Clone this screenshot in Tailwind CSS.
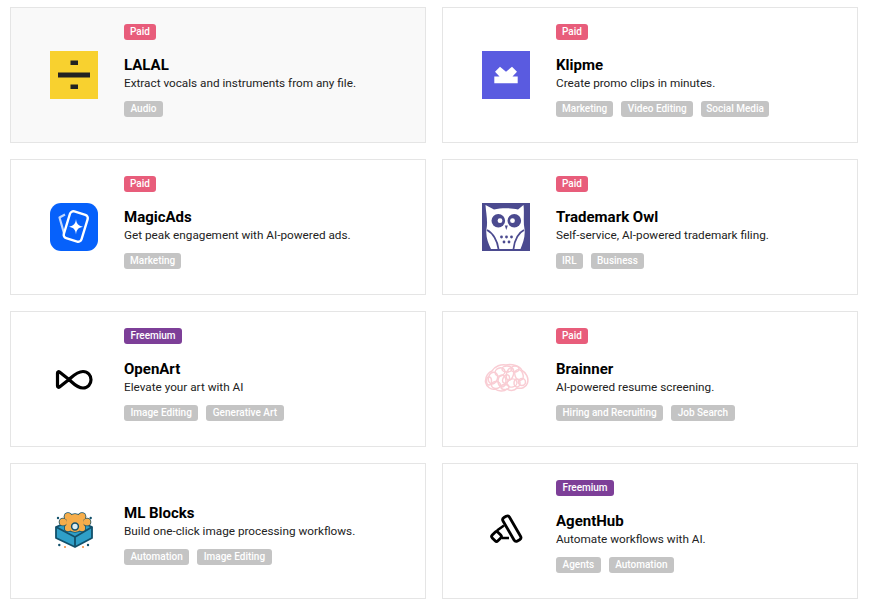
<!DOCTYPE html>
<html lang="en">
<head>
    <meta charset="UTF-8">
    <meta name="viewport" content="width=device-width, initial-scale=1.0">
    <title>AI Tools</title>
    <script src="https://cdn.jsdelivr.net/npm/@tailwindcss/browser@4"></script>
</head>
<body class="bg-white font-['Roboto',sans-serif] overflow-hidden">
    <div class="grid grid-cols-[416px_416px] gap-4 pl-[10px] pt-[7px]">

        <!-- LALAL -->
        <a class="flex items-center h-[136px] pl-[39px] border border-[#e5e5e5] bg-[#f9f9f9]">
            <svg class="w-12 h-12 shrink-0" viewBox="0 0 48 48">
                <rect width="48" height="48" fill="#f8d12f"/>
                <rect x="20.5" y="9.5" width="7.5" height="4.5" fill="#222"/>
                <rect x="8" y="21.5" width="32" height="5" fill="#222"/>
                <rect x="20.5" y="33.5" width="7.5" height="4.5" fill="#222"/>
            </svg>
            <div class="ml-[26px] pb-[9px]">
                <span class="block w-fit h-4 px-[6px] rounded-[3px] bg-[#e85d7b] text-white text-[10px] leading-4 font-medium">Paid</span>
                <h2 class="mt-4 text-[15px] leading-[18px] font-bold text-black">LALAL</h2>
                <p class="text-[11.75px] leading-[18px] text-[#222]">Extract vocals and instruments from any file.</p>
                <div class="flex gap-2 mt-[9px]">
                    <span class="h-4 px-[6.5px] rounded-[3px] bg-[#c4c4c4] text-white text-[10px] leading-4 font-medium">Audio</span>
                </div>
            </div>
        </a>

        <!-- Klipme -->
        <a class="flex items-center h-[136px] pl-[39px] border border-[#e5e5e5] bg-white">
            <svg class="w-12 h-12 shrink-0" viewBox="0 0 48 48">
                <rect width="48" height="48" fill="#5a5be0"/>
                <path d="M13 20.7 L18 15.8 L24 20.7 L30 15.8 L35 20.7 L30.5 25.5 H35.7 V32.3 H12.3 V25.5 H17.5 Z" fill="#fff"/>
            </svg>
            <div class="ml-[26px] pb-[9px]">
                <span class="block w-fit h-4 px-[6px] rounded-[3px] bg-[#e85d7b] text-white text-[10px] leading-4 font-medium">Paid</span>
                <h2 class="mt-4 text-[15px] leading-[18px] font-bold text-black">Klipme</h2>
                <p class="text-[11.75px] leading-[18px] text-[#222]">Create promo clips in minutes.</p>
                <div class="flex gap-2 mt-[9px]">
                    <span class="h-4 px-[6px] rounded-[3px] bg-[#c4c4c4] text-white text-[10px] leading-4 font-medium">Marketing</span>
                    <span class="h-4 px-[6.5px] rounded-[3px] bg-[#c4c4c4] text-white text-[10px] leading-4 font-medium">Video Editing</span>
                    <span class="h-4 px-[5px] rounded-[3px] bg-[#c4c4c4] text-white text-[10px] leading-4 font-medium">Social Media</span>
                </div>
            </div>
        </a>

        <!-- MagicAds -->
        <a class="flex items-center h-[136px] pl-[39px] border border-[#e5e5e5] bg-white">
            <svg class="w-12 h-12 shrink-0" viewBox="0 0 48 48">
                <rect width="48" height="48" rx="11" fill="#0661fb"/>
                <path d="M15 11.5 L9.5 14.5 L14.5 32" fill="none" stroke="#fff" stroke-opacity=".75" stroke-width="2.2" stroke-linejoin="round"/>
                <rect x="16.5" y="9.5" width="18.5" height="28" rx="3.5" transform="rotate(17 25.75 23.5)" fill="#0661fb" stroke="#fff" stroke-width="2.4"/>
                <path d="M26 16 C26.6 21 28 22.6 33 23.7 C28 24.8 26.6 26.4 26 31.5 C25.4 26.4 24 24.8 19 23.7 C24 22.6 25.4 21 26 16 Z" fill="#fff"/>
            </svg>
            <div class="ml-[26px] pb-[9px]">
                <span class="block w-fit h-4 px-[6px] rounded-[3px] bg-[#e85d7b] text-white text-[10px] leading-4 font-medium">Paid</span>
                <h2 class="mt-4 text-[15px] leading-[18px] font-bold text-black">MagicAds</h2>
                <p class="text-[11.75px] leading-[18px] text-[#222]">Get peak engagement with AI-powered ads.</p>
                <div class="flex gap-2 mt-[9px]">
                    <span class="h-4 px-[6px] rounded-[3px] bg-[#c4c4c4] text-white text-[10px] leading-4 font-medium">Marketing</span>
                </div>
            </div>
        </a>

        <!-- Trademark Owl -->
        <a class="flex items-center h-[136px] pl-[39px] border border-[#e5e5e5] bg-white">
            <svg class="w-12 h-12 shrink-0" viewBox="0 0 48 48">
                <rect width="48" height="48" fill="#4b4a8f"/>
                <path d="M3.5 2 L12 6.5 C19 4.8 29 4.8 36 6.5 L41.5 2 C42.5 10 41 18 42.5 26 C43.5 33 41 40 38.5 46 H9 C6 40 3.5 33 4.5 26 C6 18 4 10 3.5 2 Z" fill="#fff"/>
                <circle cx="16.3" cy="17.7" r="6.8" fill="#4b4a8f"/>
                <circle cx="32.3" cy="17.7" r="6.8" fill="#4b4a8f"/>
                <circle cx="18" cy="17.7" r="2.4" fill="#fff"/>
                <circle cx="30.5" cy="17.7" r="2.4" fill="#fff"/>
                <path d="M22.8 22.5 H25.8 L24.3 27 Z" fill="#4b4a8f"/>
                <g fill="none" stroke="#4b4a8f" stroke-width="1.8">
                    <path d="M5 27 C11 30 15.5 38 16.5 46"/>
                    <path d="M42 27 C36 30 32.5 38 31.5 46"/>
                </g>
                <g fill="#4b4a8f">
                    <circle cx="19.5" cy="34" r="1.4"/><circle cx="24.5" cy="34" r="1.4"/><circle cx="29.5" cy="34" r="1.4"/>
                    <circle cx="22" cy="39" r="1.4"/><circle cx="27" cy="39" r="1.4"/>
                </g>
            </svg>
            <div class="ml-[26px] pb-[9px]">
                <span class="block w-fit h-4 px-[6px] rounded-[3px] bg-[#e85d7b] text-white text-[10px] leading-4 font-medium">Paid</span>
                <h2 class="mt-4 text-[15px] leading-[18px] font-bold text-black">Trademark Owl</h2>
                <p class="text-[11.75px] leading-[18px] text-[#222]">Self-service, AI-powered trademark filing.</p>
                <div class="flex gap-2 mt-[9px]">
                    <span class="h-4 px-[6px] rounded-[3px] bg-[#c4c4c4] text-white text-[10px] leading-4 font-medium">IRL</span>
                    <span class="h-4 px-[6.5px] rounded-[3px] bg-[#c4c4c4] text-white text-[10px] leading-4 font-medium">Business</span>
                </div>
            </div>
        </a>

        <!-- OpenArt -->
        <a class="flex items-center h-[136px] pl-[39px] border border-[#e5e5e5] bg-white">
            <svg class="w-12 h-12 shrink-0" viewBox="0 0 48 48">
                <path d="M9.5 17 L19 24.5 C23 28 27 33 33 33 C38 33 41 29 41 24.7 C41 20.5 38 16.5 33 16.5 C27 16.5 23 21 19 24.5 L9.5 32 C8.5 32.7 7.5 32 7.5 31 V18 C7.5 17 8.5 16.3 9.5 17 Z" fill="none" stroke="#000" stroke-width="3.2" stroke-linejoin="round"/>
            </svg>
            <div class="ml-[26px] pb-[9px]">
                <span class="block w-fit h-4 px-[6.5px] rounded-[3px] bg-[#7d3f98] text-white text-[10px] leading-4 font-medium">Freemium</span>
                <h2 class="mt-4 text-[15px] leading-[18px] font-bold text-black">OpenArt</h2>
                <p class="text-[11.75px] leading-[18px] text-[#222]">Elevate your art with AI</p>
                <div class="flex gap-2 mt-[9px]">
                    <span class="h-4 px-[6.5px] rounded-[3px] bg-[#c4c4c4] text-white text-[10px] leading-4 font-medium">Image Editing</span>
                    <span class="h-4 px-[6.5px] rounded-[3px] bg-[#c4c4c4] text-white text-[10px] leading-4 font-medium">Generative Art</span>
                </div>
            </div>
        </a>

        <!-- Brainner -->
        <a class="flex items-center h-[136px] pl-[39px] border border-[#e5e5e5] bg-white">
            <svg class="w-12 h-12 shrink-0" viewBox="0 0 48 48">
                <g fill="none" stroke="#f9cdd4" stroke-width="1.5">
                    <path d="M3.5 27 C3 21 7 17 10 16 C13 11 19 9 24 10 C30 8.5 38 11 40 15.5 C44 17.5 47 23 45.5 28 C44 33 39 34 35 33 C32 36.5 27 35.5 25 34 C22 37 16 36.5 13 34 C9 35 4.5 32 3.5 27 Z"/>
                    <ellipse cx="11" cy="23" rx="4.5" ry="6" transform="rotate(20 11 23)"/>
                    <ellipse cx="18" cy="17" rx="5" ry="4" transform="rotate(-20 18 17)"/>
                    <ellipse cx="20" cy="26" rx="4" ry="6"/>
                    <ellipse cx="28" cy="19" rx="3.5" ry="6.5" transform="rotate(15 28 19)"/>
                    <ellipse cx="30" cy="28" rx="5" ry="4" transform="rotate(-15 30 28)"/>
                    <ellipse cx="37" cy="20" rx="4" ry="5.5" transform="rotate(-20 37 20)"/>
                    <ellipse cx="40" cy="27" rx="3.5" ry="3.5"/>
                    <ellipse cx="14" cy="30" rx="4.5" ry="3.5"/>
                    <ellipse cx="25" cy="14" rx="5" ry="3"/>
                    <ellipse cx="33" cy="14" rx="4" ry="3"/>
                    <ellipse cx="24" cy="24" rx="3" ry="4.5" transform="rotate(30 24 24)"/>
                    <ellipse cx="35" cy="28" rx="3" ry="4"/>
                    <ellipse cx="23" cy="32" rx="4" ry="2.5"/>
                    <ellipse cx="7" cy="26" rx="2.5" ry="4"/>
                </g>
            </svg>
            <div class="ml-[26px] pb-[9px]">
                <span class="block w-fit h-4 px-[6px] rounded-[3px] bg-[#e85d7b] text-white text-[10px] leading-4 font-medium">Paid</span>
                <h2 class="mt-4 text-[15px] leading-[18px] font-bold text-black">Brainner</h2>
                <p class="text-[11.75px] leading-[18px] text-[#222]">AI-powered resume screening.</p>
                <div class="flex gap-2 mt-[9px]">
                    <span class="h-4 px-[6.5px] rounded-[3px] bg-[#c4c4c4] text-white text-[10px] leading-4 font-medium">Hiring and Recruiting</span>
                    <span class="h-4 px-[6.5px] rounded-[3px] bg-[#c4c4c4] text-white text-[10px] leading-4 font-medium">Job Search</span>
                </div>
            </div>
        </a>

        <!-- ML Blocks -->
        <a class="flex items-center h-[136px] pl-[39px] border border-[#e5e5e5] bg-white">
            <svg class="w-12 h-12 shrink-0" viewBox="0 0 48 48">
                <path d="M6 20 L25 12 L42 20 V31 L25 40 L6 31 Z" fill="#2f9fc8" stroke="#12506b" stroke-width="1.8" stroke-linejoin="round"/>
                <path d="M6 20 L25 30 L42 20 M25 30 V40" fill="none" stroke="#12506b" stroke-width="1.8" stroke-linejoin="round"/>
                <g fill="#12506b">
                    <circle cx="25" cy="16" r="9.8"/>
                    <circle cx="13" cy="15" r="4.3"/><circle cx="18" cy="9.5" r="4.3"/><circle cx="32" cy="9.5" r="4.3"/><circle cx="37" cy="15" r="4.3"/>
                    <circle cx="18" cy="21" r="4"/><circle cx="32" cy="21" r="4"/>
                </g>
                <g fill="#f6ad4b">
                    <circle cx="25" cy="16" r="9"/>
                    <circle cx="13" cy="15" r="3.5"/><circle cx="18" cy="9.5" r="3.5"/><circle cx="32" cy="9.5" r="3.5"/><circle cx="37" cy="15" r="3.5"/>
                    <circle cx="18" cy="21" r="3.2"/><circle cx="32" cy="21" r="3.2"/>
                </g>
                <circle cx="25" cy="19.5" r="3.4" fill="#dcecf2" stroke="#12506b" stroke-width="1.5"/>
                <g fill="#12506b">
                    <circle cx="8" cy="11" r="1.2"/><circle cx="40.7" cy="11" r="1.2"/><circle cx="9.3" cy="38" r="1.2"/><circle cx="38" cy="38" r="1.2"/>
                </g>
                <circle cx="15" cy="40" r="1" fill="#f08a3c"/><circle cx="33" cy="40" r="1" fill="#f08a3c"/>
            </svg>
            <div class="ml-[26px] pb-[9px]">
                <h2 class="mt-4 text-[15px] leading-[18px] font-bold text-black">ML Blocks</h2>
                <p class="text-[11.75px] leading-[18px] text-[#222]">Build one-click image processing workflows.</p>
                <div class="flex gap-2 mt-[9px]">
                    <span class="h-4 px-[6.5px] rounded-[3px] bg-[#c4c4c4] text-white text-[10px] leading-4 font-medium">Automation</span>
                    <span class="h-4 px-[6.5px] rounded-[3px] bg-[#c4c4c4] text-white text-[10px] leading-4 font-medium">Image Editing</span>
                </div>
            </div>
        </a>

        <!-- AgentHub -->
        <a class="flex items-center h-[136px] pl-[39px] border border-[#e5e5e5] bg-white">
            <svg class="w-12 h-12 shrink-0" viewBox="0 0 48 48">
                <rect x="26" y="8" width="7.5" height="27" rx="2.5" transform="rotate(-30 30 21.5)" fill="none" stroke="#000" stroke-width="2.8"/>
                <rect x="10.5" y="25.5" width="8" height="8" rx="2" transform="rotate(45 14.5 29.5)" fill="none" stroke="#000" stroke-width="2.8"/>
                <path d="M15 23.5 L22 18.5 M20 31 L27 31" stroke="#000" stroke-width="2.6" fill="none"/>
            </svg>
            <div class="ml-[26px] pb-[9px]">
                <span class="block w-fit h-4 px-[6.5px] rounded-[3px] bg-[#7d3f98] text-white text-[10px] leading-4 font-medium">Freemium</span>
                <h2 class="mt-4 text-[15px] leading-[18px] font-bold text-black">AgentHub</h2>
                <p class="text-[11.75px] leading-[18px] text-[#222]">Automate workflows with AI.</p>
                <div class="flex gap-2 mt-[9px]">
                    <span class="h-4 px-[6.5px] rounded-[3px] bg-[#c4c4c4] text-white text-[10px] leading-4 font-medium">Agents</span>
                    <span class="h-4 px-[6.5px] rounded-[3px] bg-[#c4c4c4] text-white text-[10px] leading-4 font-medium">Automation</span>
                </div>
            </div>
        </a>

    </div>
</body>
</html>
